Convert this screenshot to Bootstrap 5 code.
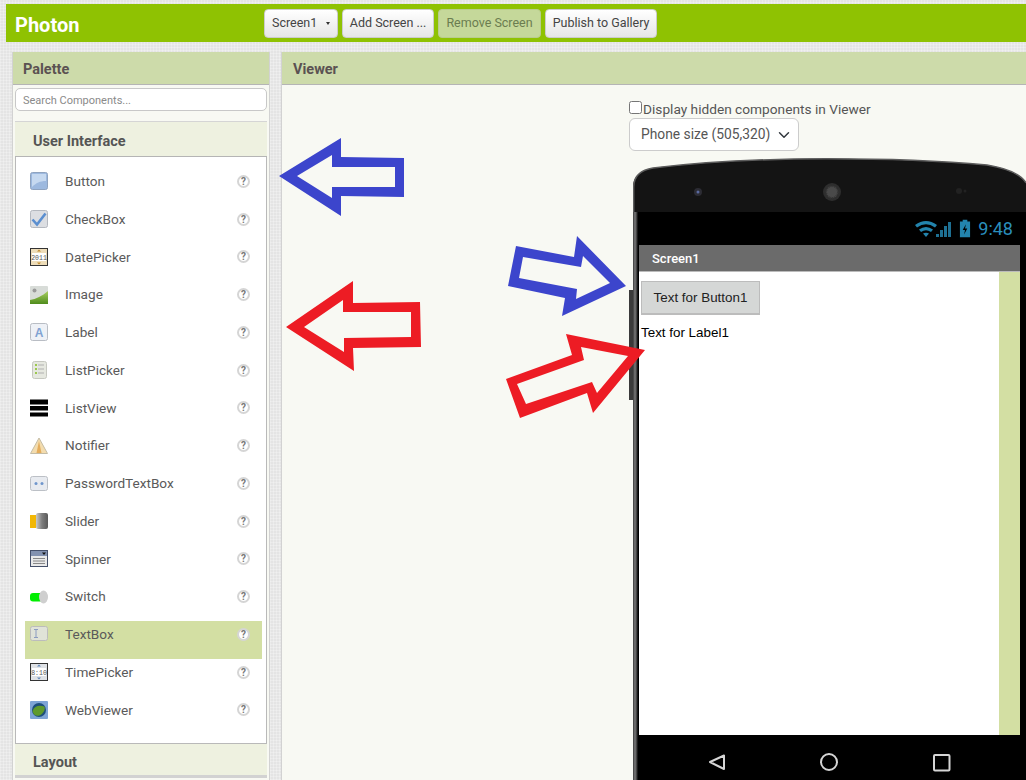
<!DOCTYPE html>
<html lang="en">

<head>
    <meta charset="UTF-8" />
    <meta name="viewport" content="width=device-width, initial-scale=1" />
    <title>Photon - Designer</title>
    <link href="https://cdn.jsdelivr.net/npm/bootstrap@5.3.0/dist/css/bootstrap.min.css" rel="stylesheet" />
    <style>
        html, body {
            height: 780px;
            overflow: hidden;
        }

        body {
            font-family: Roboto, sans-serif;
            color: #555;
            background-color: #e4e4e4;
            background-image:
                repeating-linear-gradient(0deg, rgba(255, 255, 255, .25) 0 1px, transparent 1px 3px),
                repeating-linear-gradient(90deg, rgba(255, 255, 255, .25) 0 1px, transparent 1px 3px);
            padding: 4px 0 0 6px;
        }

        .top-bar {
            height: 38px;
            background: #8fc202;
            padding-left: 9px;
        }

        .app-name {
            width: 249px;
            padding-top: 3px;
            font-size: 20px;
            font-weight: 700;
            color: #fff;
        }

        .tool-btn {
            height: 29px;
            padding: 0 7px 2px;
            font-size: 12.5px;
            line-height: 25px;
            color: #444;
            background: linear-gradient(#fff, #e6e6e6);
            border: 1px solid #ccc;
            border-radius: 4px;
            white-space: nowrap;
        }

        .tool-btn.is-off {
            color: #6b7d50;
            background: #c5d89a;
            border-color: #b9cc8e;
        }

        .tool-caret {
            display: inline-block;
            margin-left: 8.5px;
            vertical-align: 2px;
            border-top: 3px solid #333;
            border-left: 2.5px solid transparent;
            border-right: 2.5px solid transparent;
        }

        .panels {
            margin: 10px 0 0 6px;
            gap: 11px;
        }

        .side-panel {
            width: 258px;
            height: 728px;
            flex: none;
            background: #f8f9f3;
            border-left: 1px solid #d2d2d2;
            border-right: 1px solid #d2d2d2;
            overflow: hidden;
        }

        .view-panel {
            width: 745px;
            height: 728px;
            flex: none;
            background: #f8f9f3;
            border-left: 1px solid #d2d2d2;
            position: relative;
        }

        .panel-head {
            height: 33px;
            padding-left: 10px;
            font-size: 14.5px;
            font-weight: 700;
            line-height: 35px;
            color: #5b5252;
            background: #cddbaa;
            border-bottom: 1px solid #b5b5b5;
        }

        .view-panel .panel-head {
            padding-left: 11px;
        }

        .search-box.form-control {
            width: 252px;
            height: 23px;
            margin: 3px 0 0 2px;
            padding: 1px 7px 0;
            font-size: 11px;
            border: 1px solid #c8c8c8;
            border-radius: 5px;
        }

        .search-box::placeholder {
            color: #8a8a8a;
        }

        .drawer-head {
            width: 252px;
            margin-left: 2px;
            padding-left: 18px;
            font-size: 14.5px;
            font-weight: 700;
            color: #555;
            background: #eef1e0;
        }

        .drawer-open {
            height: 36px;
            margin-top: 10px;
            line-height: 40px;
            border-top: 1px solid #d5d5d5;
            border-bottom: 1px solid #b5b5b5;
        }

        .drawer-shut {
            height: 34px;
            line-height: 37px;
            border-bottom: 3px solid #d2d2d2;
        }

        .comp-list {
            width: 252px;
            height: 587px;
            margin-left: 2px;
            padding: 11px 4px 0 9px;
            background: #fff;
            border: 1px solid #b9b9b9;
            border-top: 0;
        }

        .comp-row {
            height: 37.75px;
            padding: 0 12px 11px 5px;
            font-size: 13.6px;
            color: #5a5a5a;
        }

        .comp-row.is-picked {
            background: #d3dfa3;
        }

        .comp-row svg {
            width: 18px;
            height: 18px;
            margin-right: 17px;
            flex: none;
        }

        .help-dot {
            width: 13px;
            height: 13px;
            font-size: 10px;
            font-weight: 700;
            line-height: 9.5px;
            text-align: center;
            color: #777;
            background: #fff;
            border: 2px solid #d5d5d5;
            border-radius: 50%;
        }

        .view-body {
            padding: 15px 0 0 347px;
        }

        .hidden-toggle {
            height: 18px;
            font-size: 13.7px;
            line-height: 18px;
            color: #555;
            white-space: nowrap;
        }

        .hidden-toggle input {
            width: 13px;
            height: 13px;
            margin: 0 1px 0 0;
            vertical-align: 0;
        }

        .size-pick.form-select {
            width: 170px;
            height: 33px;
            padding: 0 0 0 11px;
            font-size: 13.8px;
            color: #555;
            border-color: #ccc;
            background-position: right 6px center;
        }

        .phone {
            position: relative;
            width: 393px;
            margin: 7px 0 0 4px;
        }

        .phone-top {
            display: block;
            width: 393px;
            height: 54px;
        }

        .phone-key {
            position: absolute;
            left: -4px;
            top: 132px;
            width: 4px;
            height: 110px;
            background: #3a3a3a;
        }

        .phone-face {
            padding: 0 6px;
            background: linear-gradient(90deg, #3a3a3a 0, #7a7a7a 2px, #333 4px, #000 5px) 0 0 / 6px 100% no-repeat #000;
        }

        .status-strip {
            height: 33px;
            padding-right: 7px;
            gap: 7px;
            font-size: 18px;
            color: #2a8ebc;
        }

        .title-strip {
            height: 27px;
            padding-left: 13px;
            font-size: 13px;
            font-weight: 500;
            line-height: 27px;
            color: #fff;
            background: #6b6b6b;
            border-bottom: 1px solid #bbb;
        }

        .screen-area {
            height: 463px;
            background: #fff;
        }

        .screen-main {
            padding: 9px 0 0 2px;
            font-family: "Liberation Sans", Arial, sans-serif;
            font-size: 13.4px;
            color: #000;
        }

        .screen-scroll {
            width: 21px;
            background: #d3dfa3;
        }

        .fake-button {
            width: 119px;
            height: 34px;
            line-height: 31px;
            text-align: center;
            color: #222;
            background: #d5d7d6;
            border: 1px solid #bcbcbc;
            border-bottom-width: 2px;
        }

        .fake-label {
            margin-top: 9px;
            line-height: 17px;
        }

        .soft-keys {
            display: block;
            width: 381px;
            height: 45px;
        }

        .note-arrows {
            position: fixed;
            left: 0;
            top: 0;
            width: 1026px;
            height: 780px;
            pointer-events: none;
        }
    </style>
</head>

<body>
    <div class="top-bar d-flex align-items-center">
        <div class="app-name">Photon</div>
        <div class="d-flex gap-1">
            <button class="btn tool-btn">Screen1<span class="tool-caret"></span></button>
            <button class="btn tool-btn">Add Screen ...</button>
            <button class="btn tool-btn is-off">Remove Screen</button>
            <button class="btn tool-btn">Publish to Gallery</button>
        </div>
    </div>

    <div class="panels d-flex">
        <div class="side-panel">
            <div class="panel-head">Palette</div>
            <input class="form-control search-box" type="text" placeholder="Search Components..." />
            <div class="drawer-head drawer-open">User Interface</div>
            <div class="comp-list">
                <div class="comp-row d-flex align-items-center">
                    <svg viewBox="0 0 18 18"><rect x="0.500" y="0.500" width="17" height="17" rx="2" fill="#9db9df" stroke="#8fa3bf" /><path d="M2 2h14v7C10 9 6 11 2 15z" fill="#c6d9f0" /></svg>
                    <span class="flex-grow-1">Button</span><span class="help-dot">?</span>
                </div>
                <div class="comp-row d-flex align-items-center">
                    <svg viewBox="0 0 18 18"><rect x="0.500" y="0.500" width="17" height="17" rx="2" fill="#dcdee2" stroke="#b4b8bf" /><path d="M2.500 9.500l4.500 5 8.500-11" fill="none" stroke="#5b8fd0" stroke-width="2.600" /></svg>
                    <span class="flex-grow-1">CheckBox</span><span class="help-dot">?</span>
                </div>
                <div class="comp-row d-flex align-items-center">
                    <svg viewBox="0 0 18 18"><rect x="0.500" y="0.500" width="17" height="17" fill="#eddcb8" stroke="#333" /><rect x="2" y="5" width="14" height="8" fill="#fff" /><path d="M9 1.500l2 2H7zM9 16.500l2-2H7z" fill="#c08a2c" /><text x="9" y="11.600" text-anchor="middle" font-family="Liberation Mono, monospace" font-size="6.500" fill="#555">2011</text></svg>
                    <span class="flex-grow-1">DatePicker</span><span class="help-dot">?</span>
                </div>
                <div class="comp-row d-flex align-items-center">
                    <svg viewBox="0 0 18 18"><defs><linearGradient id="imgGreen" x1="0" y1="0" x2="0" y2="1"><stop offset="0" stop-color="#a9cf60" /><stop offset="1" stop-color="#4f8c1c" /></linearGradient></defs><rect width="18" height="18" rx="1" fill="#d8dcd8" /><circle cx="4.500" cy="4.500" r="2" fill="#9a9a9a" /><path d="M0 14C6 13 12 10 18 5v13H0z" fill="url(#imgGreen)" /></svg>
                    <span class="flex-grow-1">Image</span><span class="help-dot">?</span>
                </div>
                <div class="comp-row d-flex align-items-center">
                    <svg viewBox="0 0 18 18"><rect x="0.500" y="0.500" width="17" height="17" rx="2" fill="#eef1f6" stroke="#b9bdc4" /><text x="9" y="14" text-anchor="middle" font-family="Liberation Sans, sans-serif" font-size="12" font-weight="700" fill="#7fa2d2">A</text></svg>
                    <span class="flex-grow-1">Label</span><span class="help-dot">?</span>
                </div>
                <div class="comp-row d-flex align-items-center">
                    <svg viewBox="0 0 18 18"><rect x="2.500" y="0.500" width="14" height="17" rx="2" fill="#e6e8e0" stroke="#c6c8c0" /><path d="M5 4h2M5 8h2M5 12h2" stroke="#9cc84e" stroke-width="2" /><path d="M8 4h6M8 8h6M8 12h6" stroke="#b0b0b0" /></svg>
                    <span class="flex-grow-1">ListPicker</span><span class="help-dot">?</span>
                </div>
                <div class="comp-row d-flex align-items-center">
                    <svg viewBox="0 0 18 18"><path d="M0 .5h18v5H0zM0 7h18v4.500H0zM0 13.500h18v4H0z" fill="#000" /></svg>
                    <span class="flex-grow-1">ListView</span><span class="help-dot">?</span>
                </div>
                <div class="comp-row d-flex align-items-center">
                    <svg viewBox="0 0 18 18"><path d="M9 1l8.500 15.500H.5z" fill="#f3dcae" stroke="#c4bca6" /><path d="M9 4l-2.500 12h5z" fill="#e5ad5c" /></svg>
                    <span class="flex-grow-1">Notifier</span><span class="help-dot">?</span>
                </div>
                <div class="comp-row d-flex align-items-center">
                    <svg viewBox="0 0 18 18"><rect x="0.500" y="2.500" width="17" height="14" rx="2" fill="#e8ebf0" stroke="#bcc0c6" /><circle cx="6" cy="9.500" r="1.500" fill="#6f96cc" /><circle cx="12" cy="9.500" r="1.500" fill="#6f96cc" /></svg>
                    <span class="flex-grow-1">PasswordTextBox</span><span class="help-dot">?</span>
                </div>
                <div class="comp-row d-flex align-items-center">
                    <svg viewBox="0 0 18 18"><defs><linearGradient id="sliderKnob" x1="0" y1="0" x2="1" y2="0"><stop offset="0" stop-color="#c9c9c9" /><stop offset=".5" stop-color="#7d7d7d" /><stop offset="1" stop-color="#5a5a5a" /></linearGradient></defs><rect y="3" width="6" height="13" fill="#f2b705" /><rect x="6" y="1" width="12" height="16" rx="2" fill="url(#sliderKnob)" /></svg>
                    <span class="flex-grow-1">Slider</span><span class="help-dot">?</span>
                </div>
                <div class="comp-row d-flex align-items-center">
                    <svg viewBox="0 0 18 18"><rect x="0.500" y="0.500" width="17" height="16" fill="#e9e9e9" stroke="#45506a" /><rect x="1" y="1" width="16" height="5" fill="#8392b0" /><path d="M12 2.500h4l-2 2.500z" fill="#111" /><path d="M3 8.500h12M3 11h12M3 13.500h12" stroke="#888" /></svg>
                    <span class="flex-grow-1">Spinner</span><span class="help-dot">?</span>
                </div>
                <div class="comp-row d-flex align-items-center">
                    <svg viewBox="0 0 18 18"><rect y="5" width="13" height="8.500" rx="3" fill="#00ee00" /><ellipse cx="13.500" cy="9" rx="4.500" ry="6.500" fill="#cfcfcf" /></svg>
                    <span class="flex-grow-1">Switch</span><span class="help-dot">?</span>
                </div>
                <div class="comp-row is-picked d-flex align-items-center">
                    <svg viewBox="0 0 18 18"><rect x="0.500" y="1.500" width="17" height="14" rx="2" fill="#e0e3d8" stroke="#bcbcbc" /><path d="M4 4.500h4M4 12.500h4M6 4.500v8" stroke="#8c9cc0" /></svg>
                    <span class="flex-grow-1">TextBox</span><span class="help-dot">?</span>
                </div>
                <div class="comp-row d-flex align-items-center">
                    <svg viewBox="0 0 18 18"><rect x="0.500" y="0.500" width="17" height="17" fill="#dfe2e6" stroke="#333" /><rect x="2" y="5" width="14" height="8" fill="#fff" /><path d="M9 1.500l2 2H7zM9 16.500l2-2H7z" fill="#5f86b8" /><text x="9" y="11.600" text-anchor="middle" font-family="Liberation Mono, monospace" font-size="6.500" fill="#555">8:10</text></svg>
                    <span class="flex-grow-1">TimePicker</span><span class="help-dot">?</span>
                </div>
                <div class="comp-row d-flex align-items-center">
                    <svg viewBox="0 0 18 18"><rect width="18" height="18" rx="1" fill="#7ea4d6" /><circle cx="9" cy="9" r="7" fill="#1d4f7c" /><path d="M2.500 10c2-5 6-6 12-4.500 1 3-1 7-5 9-3 1-6 0-7-4.500z" fill="#5f9a2c" /></svg>
                    <span class="flex-grow-1">WebViewer</span><span class="help-dot">?</span>
                </div>
            </div>
            <div class="drawer-head drawer-shut">Layout</div>
        </div>

        <div class="view-panel">
            <div class="panel-head">Viewer</div>
            <div class="view-body">
                <label class="hidden-toggle d-block"><input type="checkbox" />Display hidden components in Viewer</label>
                <select class="form-select size-pick">
                    <option>Phone size (505,320)</option>
                </select>
                <div class="phone">
                    <div class="phone-key"></div>
                    <svg class="phone-top" viewBox="0 0 393 54">
                        <path d="M0 54V29C0 18 8 12 20 10 70 4 130 0.800 194 0.800 250 0.800 310 3 354 7 372 10 388 16 393 25V54z" fill="#141414" />
                        <path d="M0.700 54V29C0.700 18 8 12 20 10 70 4 130 0.800 194 0.800 250 0.800 310 3 354 7 372 10 388 16 393 25" fill="none" stroke="#5c5c5c" stroke-width="1.500" />
                        <circle cx="65" cy="34" r="4" fill="#2c2c34" />
                        <circle cx="65" cy="34" r="1.500" fill="#5a6aa0" />
                        <circle cx="199" cy="34" r="9" fill="#2e2e2e" />
                        <circle cx="199" cy="34" r="6" fill="#4a4a4a" stroke="#333" stroke-dasharray="1 1" stroke-width="2" />
                        <circle cx="326" cy="33" r="3" fill="#222" />
                        <circle cx="332" cy="33" r="1.500" fill="#222" />
                    </svg>
                    <div class="phone-face">
                        <div class="status-strip d-flex align-items-center justify-content-end">
                            <svg width="37" height="18" viewBox="0 0 37 18">
                                <path d="M0 5Q11 -3 22 5l-2 2.500Q11 1 2 7.500zM4 9.500Q11 4.500 18 9.500l-2 2.500Q11 8.500 6 12zM8 13.500Q11 12 14 13.500L11 17z" fill="#2384ad" />
                                <path d="M21 14h3v3h-3zM25 10h3v7h-3zM29 6h3v11h-3zM33 2h3v15h-3z" fill="#2384ad" opacity=".85" />
                            </svg>
                            <svg width="12" height="19" viewBox="0 0 13 19">
                                <path d="M4 0h5v2h3v17H1V2h3z" fill="#2384ad" />
                                <path d="M7.500 5L4 11h2.500l-1 5L9 9.500H6.500z" fill="#000" />
                            </svg>
                            <span>9:48</span>
                        </div>
                        <div class="title-strip">Screen1</div>
                        <div class="screen-area d-flex">
                            <div class="screen-main flex-grow-1">
                                <div class="fake-button">Text for Button1</div>
                                <div class="fake-label">Text for Label1</div>
                            </div>
                            <div class="screen-scroll"></div>
                        </div>
                        <svg class="soft-keys" viewBox="0 0 381 45">
                            <path d="M85 20.500V34L71 27z" fill="none" stroke="#d5d5d5" stroke-width="2" stroke-linejoin="round" />
                            <circle cx="190" cy="27" r="8" fill="none" stroke="#d5d5d5" stroke-width="2" />
                            <rect x="295" y="20" width="15.500" height="15.500" rx="1" fill="none" stroke="#d5d5d5" stroke-width="2" />
                        </svg>
                    </div>
                </div>
            </div>
        </div>
    </div>

    <svg class="note-arrows" viewBox="0 0 1026 780">
        <path fill="#3c45cc" fill-rule="evenodd" d="M279 176L341 138V157L404 158V197L341 196V216zM297 176L332 198V187H395V167H332V155z" />
        <path fill="#ed1c24" fill-rule="evenodd" d="M286 327L353 281V303L420 302L421 347L353 348L354 371zM304 327L344 352V338L411 337V312H343V300z" />
        <path fill="#3c45cc" fill-rule="evenodd" d="M516 246L574 257L577 236L626 286L562 316L565 298L508 286zM523 257L519 278L577 289L576 299L610 283L583 256L581 267z" />
        <path fill="#ed1c24" fill-rule="evenodd" d="M645 350L566 334L572 355L506 379L520 418L587 393L593 413zM628 356L581 347L584 360L517 384L526 404L592 382L597 393z" />
    </svg>

    <script src="https://cdn.jsdelivr.net/npm/bootstrap@5.3.0/dist/js/bootstrap.bundle.min.js"></script>
</body>

</html>
